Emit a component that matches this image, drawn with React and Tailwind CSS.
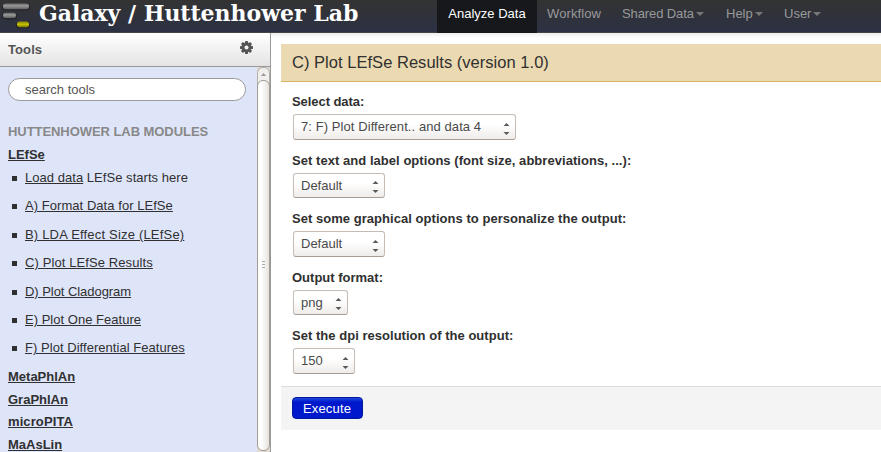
const NAV = [
  { label: 'Analyze Data', box: 'w-[100px] justify-center bg-[#16181c] text-white' },
  { label: 'Workflow', box: 'w-[75px] pl-[10px] tracking-[0.1px]' },
  { label: 'Shared Data', menu: true, box: 'w-[104px] pl-[10px] tracking-[-0.1px]' },
  { label: 'Help', menu: true, box: 'w-[58px] pl-[10px]' },
  { label: 'User', menu: true, box: 'w-[58px] pl-[10px]' },
];

const TOOLS = [
  { link: 'Load data', note: ' LEfSe starts here', row: 'h-[28px] tracking-[0.04px]' },
  { link: 'A) Format Data for LEfSe', row: 'h-[29px] tracking-[0.05px]' },
  { link: 'B) LDA Effect Size (LEfSe)', row: 'h-[28px] tracking-[0.19px]' },
  { link: 'C) Plot LEfSe Results', row: 'h-[29px] tracking-[0.1px]' },
  { link: 'D) Plot Cladogram', row: 'h-[28px] tracking-[-0.05px]' },
  { link: 'E) Plot One Feature', row: 'h-[28px] tracking-[0.02px]' },
  { link: 'F) Plot Differential Features', row: 'h-[29px] tracking-[0.04px]' },
];

const SECTIONS = [
  { name: 'MetaPhlAn', row: 'h-[23px]' },
  { name: 'GraPhlAn', row: 'h-[22px]' },
  { name: 'microPITA', row: 'h-[23px] tracking-[0.1px]' },
  { name: 'MaAsLin', row: 'h-[22px]' },
];

const FIELDS = [
  { label: 'Select data:', value: '7: F) Plot Different.. and data 4', width: 'w-[223px] tracking-[0.08px]', row: 'h-[59px]', box: 'h-[26px]', arrows: 'mt-[8px]', spacing: 'tracking-[-0.06px]' },
  { label: 'Set text and label options (font size, abbreviations, ...):', value: 'Default', width: 'w-[92px]', row: 'h-[58px]', box: 'h-[25px]', arrows: 'mt-[7px]', spacing: 'tracking-[0.045px]' },
  { label: 'Set some graphical options to personalize the output:', value: 'Default', width: 'w-[92px]', row: 'h-[59px]', box: 'h-[26px]', arrows: 'mt-[8px]', spacing: 'tracking-[0.04px]' },
  { label: 'Output format:', value: 'png', width: 'w-[55px]', row: 'h-[58px]', box: 'h-[25px]', arrows: 'mt-[7px]', spacing: '' },
  { label: 'Set the dpi resolution of the output:', value: '150', width: 'w-[62px]', row: 'h-[59px]', box: 'h-[26px]', arrows: 'mt-[8px]', spacing: 'tracking-[0.03px]' },
];

function Logo() {
  return (
    <svg width="32" height="30" viewBox="0 0 32 30" className="block shrink-0">
      <defs>
        <linearGradient id="steel" x1="0" y1="0" x2="0" y2="1">
          <stop offset="0" stopColor="#686868" />
          <stop offset="0.4" stopColor="#989898" />
          <stop offset="1" stopColor="#606060" />
        </linearGradient>
        <linearGradient id="gold" x1="0" y1="0" x2="0" y2="1">
          <stop offset="0" stopColor="#8c8a00" />
          <stop offset="0.5" stopColor="#c4c000" />
          <stop offset="1" stopColor="#7c7900" />
        </linearGradient>
      </defs>
      <g fill="#1c1d20" opacity="0.6">
        <rect x="2" y="4" width="28" height="6.6" rx="3.3" />
        <rect x="2" y="13" width="15" height="6.4" rx="3.2" />
        <rect x="16" y="22" width="14" height="6.6" rx="3.3" />
      </g>
      <rect x="3" y="3.5" width="26" height="5.7" rx="2.7" fill="url(#steel)" />
      <rect x="3" y="12.8" width="13" height="5.2" rx="2.5" fill="url(#steel)" />
      <rect x="17" y="21.6" width="12" height="5.6" rx="2.6" fill="url(#gold)" />
    </svg>
  );
}

function Gear() {
  return (
    <svg width="14" height="14" viewBox="-7.5 -6.5 14 14" className="block">
      <g fill="#555">
        {[0, 45, 90, 135].map((angle) => (
          <rect key={angle} x="-1.5" y="-6.5" width="3" height="13" rx="0.4" transform={`rotate(${angle})`} />
        ))}
        <circle r="5" />
      </g>
      <circle r="2" fill="#f4f4f4" />
    </svg>
  );
}

function Select({ value, width, box, arrows }) {
  return (
    <div className={`ml-px flex items-center justify-between rounded-[3px] border border-[#c5bcb5] border-b-[#a89d95] bg-linear-to-b from-white from-40% to-[#efecea] pr-[5px] pl-[7px] text-[#4a4a4a] ${width} ${box}`}>
      <span className="leading-[18px] whitespace-nowrap">{value}</span>
      <svg width="7" height="12" viewBox="0 0 7 12" className={`block self-start ${arrows}`}>
        <path d="M0.5 3L3.5 0L6.5 3ZM0.5 9L3.5 12L6.5 9Z" fill="#5a5a5a" />
      </svg>
    </div>
  );
}

export default function App() {
  return (
    <div className="flex h-[452px] w-[881px] flex-col overflow-hidden bg-white font-['Liberation_Sans',Arial,sans-serif] text-[13px] leading-[18px] text-[#303030]">
      <header className="flex h-[33px] shrink-0 border-b border-[#444] bg-linear-to-b from-[#333] to-[#2c3143]">
        <div className="flex w-[437px] shrink-0">
          <Logo />
          <h1 className="ml-[7px] font-['DejaVu_Serif',serif] text-[22px] leading-[26px] font-bold tracking-[-0.03px] whitespace-nowrap text-white">Galaxy / Huttenhower Lab</h1>
        </div>
        <nav className="flex text-[#999]">
          {NAV.map((item) => (
            <a key={item.label} className={`flex h-[33px] items-start pt-[5px] whitespace-nowrap ${item.box}`}>
              {item.label}
              {item.menu && <span className="mt-[7px] ml-[2px] h-0 w-0 border-x-[4px] border-t-[4px] border-x-transparent border-t-[#777]" />}
            </a>
          ))}
        </nav>
      </header>

      <div className="flex min-h-0 flex-1">
        <aside className="flex w-[271px] shrink-0 flex-col border-r border-[#999]">
          <div className="flex h-[34px] shrink-0 items-center justify-between border-b border-[#999] bg-linear-to-b from-white to-[#e4e4e4] pr-[17px] pl-2">
            <b className="pt-px tracking-[0.1px] text-[#555]">Tools</b>
            <div className="mb-[3px]"><Gear /></div>
          </div>
          <div className="flex min-h-0 flex-1">
            <div className="flex w-[257px] shrink-0 flex-col overflow-hidden bg-[#dfe5f9] pl-2">
              <div className="mt-[11px] flex h-[23px] w-[238px] shrink-0 items-center rounded-full border border-[#999] bg-white pl-4 text-[#555]">search tools</div>
              <h2 className="mt-[22px] h-[23px] shrink-0 font-bold tracking-[-0.06px] text-[#888]">HUTTENHOWER LAB MODULES</h2>
              <b className="h-[23px] shrink-0 underline">LEfSe</b>
              <ul className="shrink-0">
                {TOOLS.map((tool) => (
                  <li key={tool.link} className={`flex pl-1 ${tool.row}`}>
                    <span className="mt-[7px] mr-2 h-[5px] w-[5px] bg-[#303030]" />
                    <span className="whitespace-pre"><a className="underline">{tool.link}</a>{tool.note}</span>
                  </li>
                ))}
              </ul>
              {SECTIONS.map((section) => (
                <b key={section.name} className={`shrink-0 underline ${section.row}`}>{section.name}</b>
              ))}
            </div>
            <div className="flex w-[13px] shrink-0 flex-col bg-[#dfd9d3]">
              <div className="flex h-[20px] shrink-0 justify-center rounded-t-[6px] border border-[#b5aea7] bg-[#f1efed] pt-[5px]">
                <svg width="5" height="3" viewBox="0 0 5 3"><path d="M0 3L2.5 0L5 3Z" fill="#9b9894" /></svg>
              </div>
              <div className="mt-[-7px] flex h-[371px] shrink-0 flex-col items-center justify-center gap-[2px] rounded-[6px] border border-[#a39c95] bg-linear-to-r from-white from-30% to-[#e6e2de] pb-[2px]">
                <i className="h-px w-[3px] bg-[#aaa]" />
                <i className="h-px w-[3px] bg-[#aaa]" />
                <i className="h-px w-[3px] bg-[#aaa]" />
              </div>
            </div>
          </div>
        </aside>

        <main className="min-w-0 flex-1 bg-linear-to-b from-[#eee] to-white to-[5px] pt-[11px] pl-[10px]">
          <h2 className="flex h-[38px] items-center border-b border-[#d8b365] bg-[#ebd9b2] pb-[2px] pl-[11px] text-[16.5px] leading-[20px] tracking-[0.03px]">C) Plot LEfSe Results (version 1.0)</h2>
          <form className="flex h-[304px] flex-col pt-[10px] pl-[11px]">
            {FIELDS.map((field) => (
              <div key={field.label} className={`shrink-0 ${field.row}`}>
                <label className={`block h-[22px] pt-px font-bold ${field.spacing}`}>{field.label}</label>
                <Select value={field.value} width={field.width} box={field.box} arrows={field.arrows} />
              </div>
            ))}
          </form>
          <footer className="h-[44px] border-t border-[#ddd] bg-[#f4f4f4] pt-[10px] pl-[11px]">
            <button className="flex h-[22px] w-[71px] items-center rounded-[4px] border border-[#001a9e] bg-linear-to-b from-[#2345dc] to-[#0018cc] to-[4px] pt-[2px] pl-[10px] tracking-[0.15px] text-white">Execute</button>
          </footer>
        </main>
      </div>
    </div>
  );
}
